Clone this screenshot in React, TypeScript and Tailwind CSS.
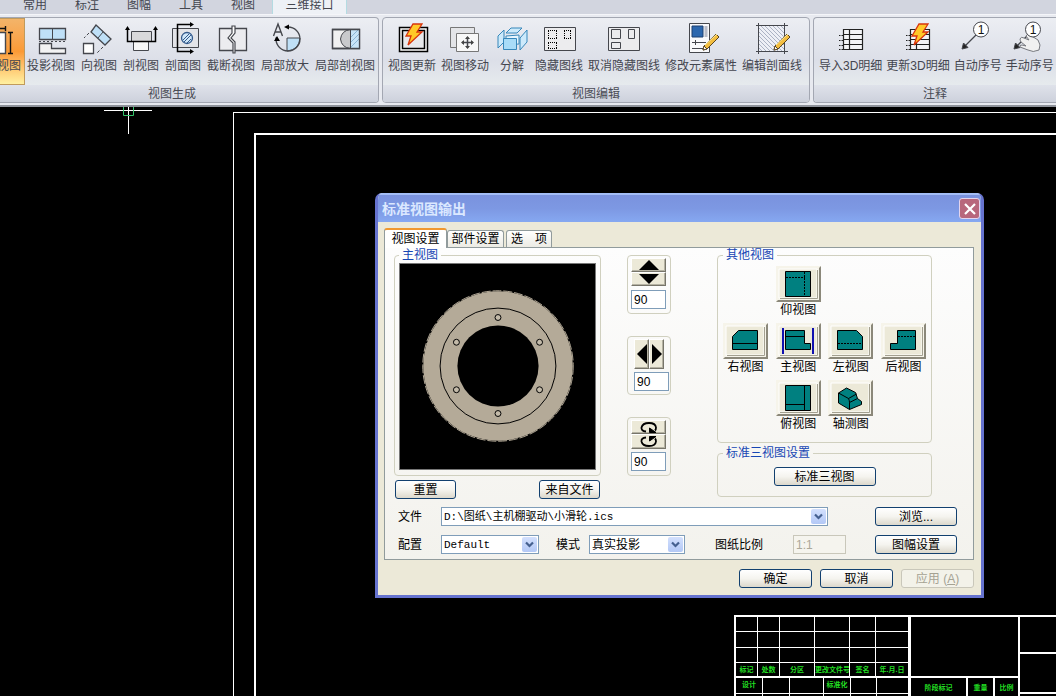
import type { ReactNode } from "react";

type Tool = { label: string; icon: ReactNode };

const Bolt = () => (
  <path d="M17 1h9l-5 8h5L12 22l3-9h-5z" fill="#ffc928" stroke="#d8340c" strokeWidth="1.3" />
);

const Pencil = () => (
  <g>
    <path d="M31 11l3 3-12 12-4 1 1-4z" fill="#f3bd3f" stroke="#5a4520" />
    <path d="M20 22l12-11" stroke="#fff0a8" />
    <path d="M18 27l1-4 3 3z" fill="#fff" stroke="#5a4520" />
  </g>
);

const Icon = ({ children }: { children: ReactNode }) => (
  <svg
    viewBox="0 0 32 32"
    className="w-8 h-8 overflow-visible"
    fill="none"
    stroke="#45474d"
    aria-hidden="true">
    {children}
  </svg>
);

const Sheet = () => (
  <g transform="translate(-2 0)">
    <path d="M10.500 6.500h19v20h-19z" fill="#f4f5f8" />
    <path d="M10.500 6.500h19v20h-19zM10 11.500h19M10 16.500h19M10 21.500h19M16.500 7v20" stroke="#222" strokeWidth="1.2" />
    <path d="M6 12.500h4M6 17.500h4M6 22.500h4M6 26.500h4" stroke="#222" strokeDasharray="1.500 1" />
  </g>
);

const Balloon = () => (
  <g>
    <circle cx="19" cy="6.500" r="7.500" fill="#fff" />
    <text x="19" y="11" fontSize="12" textAnchor="middle" fill="#111" stroke="none">
      1
    </text>
  </g>
);

const createTools: Tool[] = [
  {
    label: "投影视图",
    icon: (
      <Icon>
        <path d="M4.500 5.500h26v11h-26z" fill="#bfe0f7" strokeWidth="1.300" />
        <path d="M17.500 5v12" />
        <path d="M4 18.500h27" strokeDasharray="2 2" />
        <path d="M4.500 20.500h12v5h14v5h-26z" fill="#f3f3f3" strokeWidth="1.300" />
      </Icon>
    ),
  },
  {
    label: "向视图",
    icon: (
      <Icon>
        <path d="M13 2l15 14-6 6L8 9z" fill="#bfe0f7" strokeWidth="1.300" />
        <path d="M20 9l-5 6" />
        <path d="M6 10l-5 5M20 24l-6 6" strokeDasharray="3 2" />
        <path d="M.5 20.500h10v10H.5z" fill="#fff" strokeWidth="1.300" />
      </Icon>
    ),
  },
  {
    label: "剖视图",
    icon: (
      <Icon>
        <path d="M8.500 18.500h15v9h-15z" fill="#f7f7f7" />
        <path d="M6.500 8.500h20v10h-20z" fill="#d9d9db" />
        <path d="M2.500 5v13.500h28V5" stroke="#000" strokeWidth="1.500" />
        <path d="M0 7l2.500-4L5 7zM28 7l2.500-4L33 7z" fill="#000" stroke="none" />
      </Icon>
    ),
  },
  {
    label: "剖面图",
    icon: (
      <Icon>
        <path d="M5.500 5.500h26v19h-26z" fill="#e3e4e8" />
        <path d="M24 1.500H10.500v27H24" stroke="#000" strokeWidth="1.500" />
        <path d="M23-1l4 2.500L23 4zM23 26l4 2.500-4 2.500z" fill="#000" stroke="none" />
        <circle cx="20" cy="15" r="5.500" fill="#cfe6f8" stroke="#345a8c" strokeWidth="1.300" />
        <path d="M16 17l6-6M17 19l7-7M20 20l4-4" stroke="#345a8c" />
      </Icon>
    ),
  },
  {
    label: "截断视图",
    icon: (
      <Icon>
        <path d="M4.500 5.500h27v22h-27z" fill="#ececef" strokeWidth="1.300" />
        <path d="M17 3v7l-4 5 5 5v10h2V19l-4-4 4-5V3z" fill="#fff" strokeWidth="1.200" />
      </Icon>
    ),
  },
  {
    label: "局部放大",
    icon: (
      <Icon>
        <path d="M18 15h13q-1 12-13 13z" fill="#bfe0f7" />
        <circle cx="19" cy="16" r="12" strokeDasharray="58 18" transform="rotate(-90 19 16)" strokeWidth="1.300" />
        <path d="M20 1.500l-5 2.500 5 2.500zM5 18l3-5 3 5z" fill="#000" stroke="none" />
        <path d="M4.500 13L9 1l4.500 12M6 9h6" strokeWidth="1.400" />
      </Icon>
    ),
  },
  {
    label: "局部剖视图",
    icon: (
      <Icon>
        <path d="M3.500 6.500h27v19h-27z" fill="#f1f1f1" strokeWidth="1.300" />
        <path d="M21 7h9v18h-9z" fill="#c8e4f7" stroke="none" />
        <path d="M22 14l7-7M22 19l8-8M22 24l8-8" stroke="#8bb4d4" />
        <path d="M21.500 6.500q-9 1-10 9.500 1 8.500 10 9.500z" fill="#c9cacc" />
        <path d="M3.500 6.500h27v19h-27z" strokeWidth="1.300" />
      </Icon>
    ),
  },
];

const editTools: Tool[] = [
  {
    label: "视图更新",
    icon: (
      <Icon>
        <path d="M3.500 4.500h28v24h-28z" fill="#fff" stroke="#000" strokeWidth="1.500" />
        <path d="M6.500 7.500h22v18h-22z" fill="#e8e9ec" stroke="#000" strokeWidth="1.500" />
        <Bolt />
      </Icon>
    ),
  },
  {
    label: "视图移动",
    icon: (
      <Icon>
        <path d="M1.500 4.500h24v20h-24z" fill="#e4e5e8" stroke="#777" />
        <path d="M7.500 10.500h22v18h-22z" fill="#f8f8f8" stroke="#777" />
        <path d="M18.500 14v11M13 19.500h11" strokeWidth="1.500" />
        <path d="M16 16l2.500-3 2.500 3zM16 23l2.500 3 2.500-3zM15 17l-3 2.500 3 2.500zM22 17l3 2.500-3 2.500z" fill="#444" stroke="none" />
      </Icon>
    ),
  },
  {
    label: "分解",
    icon: (
      <Icon>
        <g stroke="#3787ba" fill="#cdeafb">
          <path d="M10 10l5-5h11l-5 5z" />
          <path d="M2 13l6-6v12l-6 6z" />
          <path d="M24 15l7-8v12l-7 8z" />
          <path d="M10 13l13-1v9l-13 1z" fill="#e8f6fe" />
          <path d="M7.500 15.500h13v11h-13z" fill="#a8dcf8" />
        </g>
      </Icon>
    ),
  },
  {
    label: "隐藏图线",
    icon: (
      <Icon>
        <path d="M1.500 4.500h31v23h-31z" fill="#ececee" />
        <path d="M5 7.500h9M5 15.500h9M5.500 8v8M13.500 8v8M21 7.500h7M21 15.500h7M21.500 8v8M27.500 8v8M5 19.500h9M5 25.500h9M5.500 20v6M13.500 20v6" stroke="#000" strokeDasharray="1 1" />
      </Icon>
    ),
  },
  {
    label: "取消隐藏图线",
    icon: (
      <Icon>
        <path d="M.5 4.500h31v23H.5z" fill="#ececee" />
        <path d="M3.500 6.500h9v9h-9zM20.500 6.500h6v9h-6zM3.500 19.500h9v6h-9z" />
      </Icon>
    ),
  },
  {
    label: "修改元素属性",
    icon: (
      <Icon>
        <path d="M4.500.5h20v29h-20z" fill="#f9f9fb" />
        <path d="M7 3h11v11H7z" fill="#2c67ae" stroke="#1d4070" />
        <path d="M19.500 3h3v11h-3z" fill="#b8bcc8" stroke="none" />
        <path d="M7 19.500h14M10.500 17v5M7 25.500h11" />
        <Pencil />
      </Icon>
    ),
  },
  {
    label: "编辑剖面线",
    icon: (
      <Icon>
        <path d="M3 3h26v26H3z" fill="#eef0f6" stroke="none" />
        <path
          d="M3 25l4 4M3 21l8 8M3 17l12 12M3 13l16 16M3 9l20 20M3 5l24 24M5 3l24 24M9 3l20 20M13 3l16 16M17 3l12 12M21 3l8 8M25 3l4 4"
          stroke="#9aa3b8"
          strokeWidth=".8"
        />
        <path d="M0 2.500h32M0 28.500h32M2.500 0v31M28.500 0v31" />
        <Pencil />
      </Icon>
    ),
  },
];

const noteTools: Tool[] = [
  { label: "导入3D明细", icon: <Icon><Sheet /></Icon> },
  {
    label: "更新3D明细",
    icon: (
      <Icon>
        <Sheet />
        <Bolt />
      </Icon>
    ),
  },
  {
    label: "自动序号",
    icon: (
      <Icon>
        <path d="M14 12L2 24" strokeWidth="1.300" />
        <path d="M0 26l1.500-6 4.500 4.500z" fill="#222" />
        <Balloon />
      </Icon>
    ),
  },
  {
    label: "手动序号",
    icon: (
      <Icon>
        <path d="M14 12L2 24" strokeWidth="1.300" />
        <path d="M0 26l1.500-6 4.500 4.500z" fill="#222" />
        <path
          d="M6 16q1-3 4-1l5 2-3-4q1-3 4-1l8 5 2 5-1 5q-6 3-11 0l-8-3q-1-2 2-2l4 1-5-4q-1-2-1-3z"
          fill="#f1f1f1"
          stroke="#77797f"
        />
        <Balloon />
      </Icon>
    ),
  },
];

const menuTabs = ["常用", "标注", "图幅", "工具", "视图"];

const ToolButton = ({ tool }: { tool: Tool }) => (
  <button className="flex flex-col items-center gap-[3px] pt-[5px] min-w-9 shrink-0 whitespace-nowrap">
    {tool.icon}
    <span className="leading-4">{tool.label}</span>
  </button>
);

const groupBase =
  "flex flex-col h-[86px] border border-[#a3a7b2] rounded bg-linear-to-b from-[#eceef3] via-[#dcdfe8] to-[#edf2f1] overflow-hidden";
const groupTitle =
  "h-[17px] leading-[18px] text-center bg-linear-to-b from-[#dfe2ea] to-[#cdd1dc] text-[#4a4c55]";

const Ribbon = () => (
  <header className="shrink-0 h-[107px] overflow-hidden bg-[#e8eaf0] border-b-2 border-[#8f939b] text-xs text-[#44464f]">
    <nav className="flex items-end h-[15px] pl-[9px] bg-[#d2d5df] border-b border-[#f4f5f9]">
      {menuTabs.map((tab) => (
        <a key={tab} href="#" className="w-[52px] h-3.5 leading-[10px] text-center">
          {tab}
        </a>
      ))}
      <a
        href="#"
        className="w-[75px] h-3.5 ml-[3px] leading-[10px] text-center bg-[#eef1f6] border-x border-[#b4dbe2]">
        三维接口
      </a>
    </nav>
    <div className="flex gap-[3px] pt-0.5">
      <section className={`${groupBase} w-[379px] shrink-0 border-l-0 rounded-l-none`}>
        <div className="flex flex-1 gap-1.5">
          <button className="flex flex-col items-end gap-[3px] w-[25px] h-[67px] pt-1 pr-[3px] -mr-1 overflow-hidden shrink-0 whitespace-nowrap border border-l-0 border-[#c09a5c] bg-linear-to-b from-[#f3b469] via-[#fb9a35] to-[#fff0a0]">
            <svg
              viewBox="0 0 22 32"
              className="w-[22px] h-8 overflow-visible"
              fill="none"
              stroke="#111"
              strokeWidth="1.400"
              aria-hidden="true">
              <path d="M-6 9.500H6.500v21H-6z" fill="#fff" stroke="#45474d" />
              <path d="M-6 5.500H6M6.500 3v5M11.500 9v21M9 9.500h5M9 30.500h5" />
            </svg>
            <span className="leading-4">视图</span>
          </button>
          {createTools.map((tool) => (
            <ToolButton key={tool.label} tool={tool} />
          ))}
        </div>
        <h2 className={`${groupTitle} pr-[34px]`}>视图生成</h2>
      </section>
      <section className={`${groupBase} w-[428px] shrink-0`}>
        <div className="flex flex-1 gap-[5px] pl-[5px]">
          {editTools.map((tool) => (
            <ToolButton key={tool.label} tool={tool} />
          ))}
        </div>
        <h2 className={groupTitle}>视图编辑</h2>
      </section>
      <section className={`${groupBase} flex-1 min-w-0 border-r-0 rounded-r-none`}>
        <div className="flex flex-1 gap-1 pl-[5px]">
          {noteTools.map((tool) => (
            <ToolButton key={tool.label} tool={tool} />
          ))}
        </div>
        <h2 className={groupTitle}>注释</h2>
      </section>
    </div>
  </header>
);

const cell = "border-r border-b border-white overflow-hidden text-center whitespace-nowrap";

const revisionLabels = ["标记", "处数", "分区", "更改文件号", "签名", "年.月.日"];

const TitleBlock = () => (
  <div className="absolute left-[734px] right-0 top-[508px] flex h-[100px] border-l-2 border-t-2 border-white text-[7px] leading-[13px] font-bold text-[#22dd22]">
    <div className="w-[175px] shrink-0 border-r-2 border-white">
      <div className="grid grid-cols-[22px_22px_35px_35px_26px_33px] grid-rows-[15px_16px_15px_14px] border-b border-white">
        {Array.from({ length: 18 }, (_, i) => (
          <div key={i} className={cell} />
        ))}
        {revisionLabels.map((label) => (
          <div key={label} className={cell}>
            {label}
          </div>
        ))}
      </div>
      <div className="grid grid-cols-[27px_27px_34px_27px_26px_32px] grid-rows-[16px_16px]">
        <div className={cell}>设计</div>
        <div className={cell} />
        <div className={cell} />
        <div className={cell}>标准化</div>
        {Array.from({ length: 8 }, (_, i) => (
          <div key={i} className={cell} />
        ))}
      </div>
    </div>
    <div className="w-[109px] shrink-0 border-r-2 border-white">
      <div className="h-[61px] border-b-2 border-white" />
      <div className="grid grid-cols-[57px_27px_23px] h-10 leading-[20px] text-center">
        <div className="border-r-2 border-white">阶段标记</div>
        <div className="border-r-2 border-white">重量</div>
        <div>比例</div>
      </div>
    </div>
    <div className="flex-1">
      <div className="h-[37px] border-b-2 border-white" />
      <div className="h-10 border-b-2 border-white" />
    </div>
  </div>
);

const xpButton =
  "h-[19px] leading-4 text-center whitespace-nowrap rounded-[3px] border border-[#12406f] bg-linear-to-b from-white via-[#f5f4ef] to-[#dcd8cc]";
const bevel =
  "flex items-center justify-center bg-[#ece9d8] border border-t-white border-l-white border-r-[#77756a] border-b-[#77756a] shadow-[inset_-1px_-1px_#b5b2a3]";
const group = "border border-[#d0d0bf] rounded-[4px]";
const legend = "px-[3px] leading-[14px] text-[#1646b4]";
const textBox = "h-[19px] pl-0.5 bg-white border border-[#7f9db9]";

type SelectProps = { id: string; value: string; className: string; mono?: string };

const Select = ({ id, value, className, mono = "" }: SelectProps) => (
  <div className={`relative ${className}`}>
    <select
      id={id}
      className={`appearance-none block w-full h-[19px] pl-0.5 leading-4 bg-white border border-[#7f9db9] ${mono}`}>
      <option>{value}</option>
    </select>
    <svg
      viewBox="0 0 15 15"
      className="absolute right-0.5 top-0.5 w-[15px] h-[15px] rounded-[2px] bg-linear-to-b from-[#d3e0fd] to-[#b3c8f6] pointer-events-none"
      aria-hidden="true">
      <path d="M4 5.500l3.500 3.500L11 5.500" fill="none" stroke="#45608f" strokeWidth="2.200" />
    </svg>
  </div>
);

const Wheel = () => (
  <svg viewBox="0 0 197 207" className="w-[197px] h-[207px] bg-black border border-[#777]" aria-label="主视图">
    <circle cx="99" cy="103" r="75.500" fill="#b4aa98" />
    <circle cx="99" cy="103" r="76" fill="none" stroke="#b4aa98" strokeDasharray="9 2" />
    <circle cx="99" cy="103" r="58.500" fill="none" stroke="#000" />
    <circle cx="99" cy="103" r="41" fill="#000" />
    {[
      [99, 54],
      [57, 79],
      [141, 79],
      [57, 127],
      [141, 127],
      [99, 151],
    ].map(([x, y]) => (
      <circle key={`${x}-${y}`} cx={x} cy={y} r="3" fill="#c3baa9" stroke="#000" />
    ))}
  </svg>
);

const Rotators = () => (
  <div className="flex flex-col gap-[22px] w-11 pt-[7px]">
    <div className={`${group} h-[59px] pl-[3px] pt-0.5`}>
      <button className={`${bevel} w-[35px] h-3.5`} aria-label="向上旋转">
        <svg viewBox="0 0 20 10" className="w-5 h-2.5">
          <path d="M10 0l10 10H0z" />
        </svg>
      </button>
      <button className={`${bevel} w-[35px] h-3.5`} aria-label="向下旋转">
        <svg viewBox="0 0 20 10" className="w-5 h-2.5">
          <path d="M10 10L0 0h20z" />
        </svg>
      </button>
      <input aria-label="上下角度" defaultValue="90" className={`${textBox} block w-[35px] mt-1`} />
    </div>
    <div className={`${group} h-[59px] pl-1.5 pt-0.5`}>
      <div className="flex">
        <button className={`${bevel} w-[15px] h-[30px]`} aria-label="向左旋转">
          <svg viewBox="0 0 10 20" className="w-2.5 h-5">
            <path d="M0 10L10 0v20z" />
          </svg>
        </button>
        <button className={`${bevel} w-[15px] h-[30px]`} aria-label="向右旋转">
          <svg viewBox="0 0 10 20" className="w-2.5 h-5">
            <path d="M10 10L0 0v20z" />
          </svg>
        </button>
      </div>
      <input aria-label="左右角度" defaultValue="90" className={`${textBox} block w-[35px] mt-[3px]`} />
    </div>
    <div className={`${group} h-[59px] pl-[3px] pt-0.5`}>
      <button className={`${bevel} w-[35px] h-3.5`} aria-label="顺时针旋转">
        <svg viewBox="0 0 18 12" className="w-[18px] h-3" fill="none" stroke="#000" strokeWidth="1.800">
          <path d="M6 10.500Q1 10 1.500 6.500 2.500 2 9 2t7 4.500q0 2-1 3" />
          <path d="M9.500 7v4.500H16z" fill="#000" stroke="#000" strokeWidth="1" />
        </svg>
      </button>
      <button className={`${bevel} w-[35px] h-[15px]`} aria-label="逆时针旋转">
        <svg viewBox="0 0 18 12" className="w-[18px] h-3" fill="none" stroke="#000" strokeWidth="1.800">
          <path d="M6 1.500Q1 2 1.500 5.500 2.500 10 9 10t7-4.500q0-2-1-3" />
          <path d="M9.500 5V.5H16z" fill="#000" stroke="#000" strokeWidth="1" />
        </svg>
      </button>
      <input aria-label="旋转角度" defaultValue="90" className={`${textBox} block w-[35px] mt-[3px]`} />
    </div>
  </div>
);

type View = { label: string; column: string; shape: ReactNode };

const views: View[] = [
  {
    label: "仰视图",
    column: "col-start-2",
    shape: (
      <>
        <path d="M9.500 5.500h25v25h-25z" />
        <path d="M10 11.500h19M28.500 6v24" strokeDasharray="2 1" />
      </>
    ),
  },
  {
    label: "右视图",
    column: "col-start-1",
    shape: <path d="M9.500 13.500l6-6h19v19h-25zM9.500 20.500h25" />,
  },
  {
    label: "主视图",
    column: "col-start-2",
    shape: (
      <>
        <path d="M9.500 7.500h19v13h6v6h-25zM9.500 13.500h19" />
        <path d="M7 5v26M37 5v26" stroke="#1010b0" strokeWidth="2" />
      </>
    ),
  },
  {
    label: "左视图",
    column: "col-start-3",
    shape: (
      <>
        <path d="M9.500 7.500h19l6 6v13h-25z" />
        <path d="M10 20.500h24" strokeDasharray="2 1" />
      </>
    ),
  },
  {
    label: "后视图",
    column: "col-start-4",
    shape: (
      <>
        <path d="M16.500 7.500h18v19h-25v-6h7z" />
        <path d="M17 13.500h17" strokeDasharray="2 1" />
      </>
    ),
  },
  {
    label: "俯视图",
    column: "col-start-2",
    shape: <path d="M9.500 5.500h25v25h-25zM28.500 5.500v25M9.500 24.500h19" />,
  },
  {
    label: "轴测图",
    column: "col-start-3",
    shape: (
      <>
        <path d="M18.500 8l9 4.500 2 6 4 3v3l-12 5-11-6.500v-10z" />
        <path d="M10.500 13l10 5.500q1 2 1 4v7M20.500 18.500l8-4.500M21.500 22.500l8-4" fill="none" />
      </>
    ),
  },
];

const OtherViews = () => (
  <fieldset className={`${group} h-[195px] px-[5px]`}>
    <legend className={legend}>其他视图</legend>
    <div className="grid grid-cols-[repeat(4,45px)] justify-between gap-y-[5px] pt-1">
      {views.map((view) => (
        <button key={view.label} className={`${view.column} flex flex-col items-center`}>
          <svg
            viewBox="0 0 45 36"
            className="w-[45px] h-9 bg-[#ece9d8]"
            fill="#008080"
            stroke="#000"
            aria-hidden="true">
            <path d="M0 0h45v36H0z" fill="#f6f4ea" stroke="none" />
            <path d="M45 0v36H0l2-2h41V2z" fill="#8b887a" stroke="none" />
            <path d="M3 3h38v29H3z" fill="#ece9d8" stroke="#fff" />
            <path d="M41.500 4v28.500H4" fill="none" stroke="#a3a090" />
            {view.shape}
          </svg>
          <span className="leading-4">{view.label}</span>
        </button>
      ))}
    </div>
  </fieldset>
);

const Dialog = () => (
  <div
    role="dialog"
    aria-label="标准视图输出"
    className="absolute left-[375px] top-[86px] w-[609px] rounded-t-[7px] overflow-hidden border-[3px] border-t-0 border-[#6673cf] bg-[#ece9d8] text-xs text-black">
    <div className="flex items-center justify-between h-[29px] pl-1 pr-px border-t-2 border-[#a3bdf6] bg-linear-to-b from-[#7a92de] via-[#7d98e3] to-[#86a8f1]">
      <h1 className="text-sm leading-4 font-bold text-[#dbe8ff]">标准视图输出</h1>
      <button
        aria-label="关闭"
        className="flex items-center justify-center w-[21px] h-[21px] rounded-[3px] border border-[#e3d5ee] bg-[#b8677c]">
        <svg viewBox="0 0 12 12" className="w-3 h-3" stroke="#fff" strokeWidth="2.200">
          <path d="M1 1l10 10M11 1L1 11" />
        </svg>
      </button>
    </div>
    <div className="pt-1.5 pl-1.5 pr-[7px] pb-[7px]">
      <div className="flex items-end" role="tablist">
        <button
          role="tab"
          aria-selected="true"
          className="relative z-10 w-[63px] h-5 mb-[-1px] leading-4 rounded-t-[3px] border-x border-t-2 border-x-[#919b9c] border-t-[#f0982f] bg-white">
          视图设置
        </button>
        <button
          role="tab"
          aria-selected="false"
          className="w-[57px] h-[17px] leading-4 rounded-t-[3px] border border-b-0 border-[#919b9c] bg-linear-to-b from-white to-[#ecebe4]">
          部件设置
        </button>
        <button
          role="tab"
          aria-selected="false"
          className="w-[46px] h-[17px] ml-0.5 leading-4 rounded-t-[3px] border border-b-0 border-[#919b9c] bg-linear-to-b from-white to-[#ecebe4]">
          选　项
        </button>
      </div>
      <div className="border border-[#919b9c] bg-linear-to-b from-[#fdfdfd] to-[#f3f2ed] pb-[5px]">
        <div className="flex pl-[9px]">
          <div className="w-[207px]">
            <fieldset className={`${group} h-[228px] pl-1`}>
              <legend className={legend}>主视图</legend>
              <div className="pt-px">
                <Wheel />
              </div>
            </fieldset>
            <div className="flex justify-between px-px pt-1">
              <button className={`${xpButton} w-[61px]`}>重置</button>
              <button className={`${xpButton} w-[61px]`}>来自文件</button>
            </div>
          </div>
          <div className="ml-[26px]">
            <Rotators />
          </div>
          <div className="flex flex-col gap-[3px] w-[215px] ml-[46px]">
            <OtherViews />
            <fieldset className={`${group} h-[51px] px-[5px]`}>
              <legend className={legend}>标准三视图设置</legend>
              <button className={`${xpButton} block w-[102px] mt-[7px] mx-auto`}>标准三视图</button>
            </fieldset>
          </div>
        </div>
        <div className="flex flex-col gap-[9px] pt-2 pl-[13px] pr-4">
          <div className="flex items-center">
            <label htmlFor="file" className="w-[43px]">
              文件
            </label>
            <Select
              id="file"
              value="D:\图纸\主机棚驱动\小滑轮.ics"
              className="w-[387px]"
              mono="text-[11px] font-['Liberation_Mono','Noto_Sans_CJK_SC',monospace]"
            />
            <button className={`${xpButton} w-[82px] ml-auto`}>浏览...</button>
          </div>
          <div className="flex items-center">
            <label htmlFor="config" className="w-[43px]">
              配置
            </label>
            <Select
              id="config"
              value="Default"
              className="w-[98px]"
              mono="text-[11px] font-['Liberation_Mono','Noto_Sans_CJK_SC',monospace]"
            />
            <label htmlFor="mode" className="w-[33px] ml-[17px]">
              模式
            </label>
            <Select id="mode" value="真实投影" className="w-24" />
            <label htmlFor="scale" className="w-[78px] ml-[30px]">
              图纸比例
            </label>
            <input
              id="scale"
              defaultValue="1:1"
              disabled
              className="w-[53px] h-[19px] pl-0.5 text-[#aca899] border border-[#c9c7ba] bg-[#f5f4ee]"
            />
            <button className={`${xpButton} w-[82px] ml-auto`}>图幅设置</button>
          </div>
        </div>
      </div>
      <div className="flex justify-end gap-2 pt-[9px]">
        <button className={`${xpButton} w-[73px]`}>确定</button>
        <button className={`${xpButton} w-[73px]`}>取消</button>
        <button
          disabled
          className="w-[73px] h-[19px] leading-4 rounded-[3px] border border-[#c9c7ba] bg-[#f3f2e9] text-[#a5a293]">
          应用 (<u>A</u>)
        </button>
      </div>
    </div>
  </div>
);

const App = (): React.JSX.Element => {
  return (
    <div className="flex flex-col h-screen bg-black font-['Liberation_Sans','Noto_Sans_CJK_SC',sans-serif]">
      <Ribbon />
      <main className="relative flex-1 overflow-hidden">
        <div className="absolute left-[233px] top-[5px] right-0 bottom-0 border-l border-t border-white" />
        <div className="absolute left-[254px] top-[26px] right-0 bottom-0 border-l-2 border-t-2 border-white" />
        <svg viewBox="0 0 48 27" className="absolute left-[104px] top-0 w-12 h-[27px]" fill="none" stroke="#fff">
          <path d="M0 3.500h48M24.500 0v27" />
          <path d="M19.500 0v8.500h10V0" stroke="#35c46a" />
        </svg>
        <TitleBlock />
        <Dialog />
      </main>
    </div>
  );
};

export default App;
